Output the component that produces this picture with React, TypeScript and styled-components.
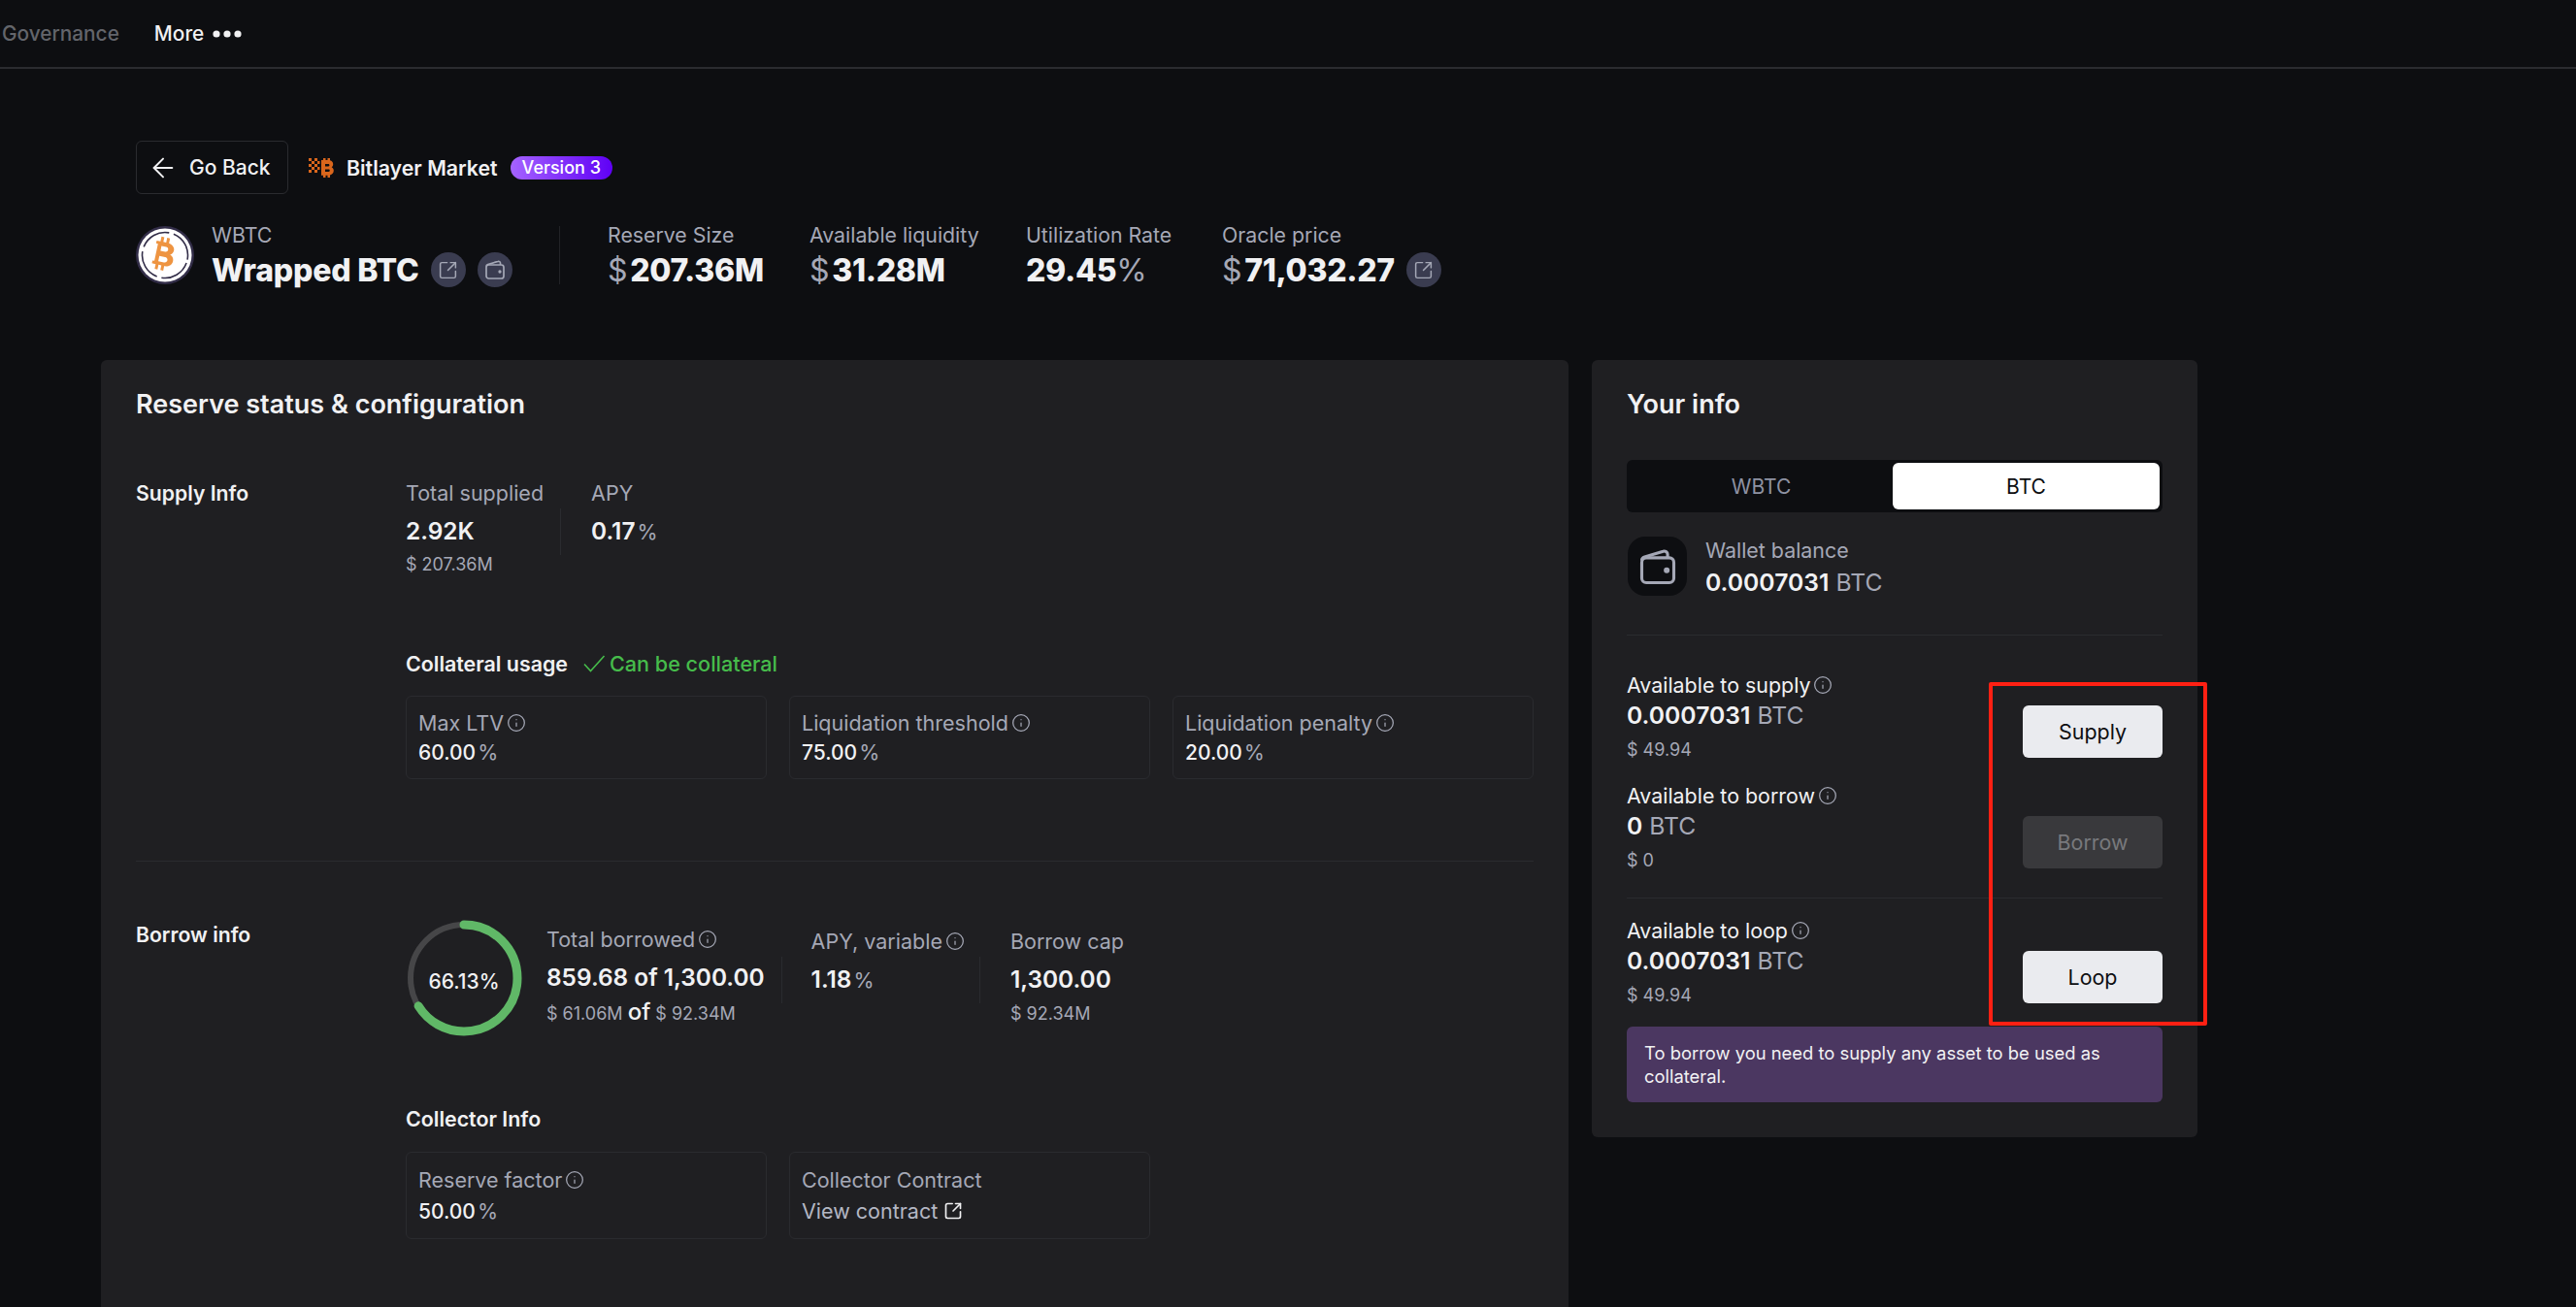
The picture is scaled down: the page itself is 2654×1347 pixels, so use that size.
import React from 'react';
import styled, { createGlobalStyle } from 'styled-components';
import { ArrowLeft, Info, SquareArrowOutUpRight } from 'lucide-react';

const GlobalStyle = createGlobalStyle`
  html, body {
    margin: 0;
    height: 100%;
    background: #0d0e11;
    overflow: hidden;
  }
  body {
    font-family: Inter, "Liberation Sans", sans-serif;
    color: #f1f1f3;
  }
  * { box-sizing: border-box; }
`;

const TopBar = styled.header`
  height: 71px;
  display: flex;
  align-items: center;
  gap: 36px;
  padding-left: 2px;
  border-bottom: 2px solid #2a2b2f;
`;

const NavItem = styled.span<{ $active?: boolean }>`
  display: flex;
  align-items: center;
  gap: 9px;
  font-size: 20.8px;
  font-weight: 500;
  color: ${(p) => (p.$active ? '#f1f1f3' : '#63656b')};
`;

const Hero = styled.section`
  padding: 74px 0 0 140px;
`;

const BackRow = styled.div`
  display: flex;
  align-items: center;
  height: 55px;
`;

const BackButton = styled.button`
  width: 157px;
  height: 55px;
  display: flex;
  align-items: center;
  gap: 11px;
  padding: 0 0 0 11px;
  margin-right: 21px;
  background: transparent;
  border: 1px solid #2a2b2f;
  border-radius: 6px;
  color: #f1f1f3;
  font: 500 21px Inter, sans-serif;
`;

const MarketName = styled.span`
  margin: 0 13px 0 13px;
  font-size: 21.3px;
  font-weight: 600;
  color: #f1f1f3;
`;

const VersionBadge = styled.span`
  height: 24px;
  padding: 0 12px;
  display: flex;
  align-items: center;
  border-radius: 12px;
  background: linear-gradient(90deg, #a563ff 0%, #5f00f5 100%);
  font-size: 18px;
  font-weight: 500;
  color: #fff;
`;

const AssetRow = styled.div`
  display: flex;
  align-items: flex-start;
  height: 60px;
  margin-top: 33px;
`;

const AssetName = styled.div`
  margin-left: 18px;
  width: 359px;
  border-right: 1px solid #222327;
  height: 60px;
`;

const HeroLabel = styled.div`
  font-size: 21.3px;
  line-height: 18px;
  color: #a5a8b6;
`;

const AssetTitle = styled.div`
  display: flex;
  align-items: center;
  height: 36px;
  margin-top: 9px;
  font-size: 32px;
  font-weight: 800;
  letter-spacing: -0.2px;
  color: #f1f1f3;
`;

const RoundIcon = styled.span`
  width: 36px;
  height: 36px;
  flex: none;
  margin-left: 12px;
  display: flex;
  align-items: center;
  justify-content: center;
  border-radius: 50%;
  background: #3a3c50;
  color: #a5a8b6;
`;

const HeroStats = styled.div`
  display: flex;
  padding-left: 49px;
`;

const HeroStat = styled.div<{ $width: number }>`
  width: ${(p) => p.$width}px;
`;

const HeroValue = styled.div`
  display: flex;
  align-items: center;
  height: 36px;
  margin-top: 9px;
  font-size: 32px;
  font-weight: 800;
  letter-spacing: -0.3px;
  color: #f1f1f3;
`;

const Unit = styled.span`
  color: #a5a8b6;
  font-weight: 400;
  margin: 0 3px;
  &:first-child { margin-left: 0; }
`;

const Panels = styled.main`
  display: flex;
  align-items: flex-start;
  gap: 24px;
  margin-top: 78px;
  padding-left: 104px;
`;

const LeftPanel = styled.section`
  width: 1512px;
  height: 1000px;
  padding: 31px 36px 0;
  border-radius: 6px;
  background: #1f1f22;
`;

const RightPanel = styled.aside`
  width: 624px;
  height: 801px;
  padding: 31px 36px 0;
  border-radius: 6px;
  background: #1f1f22;
`;

const PanelTitle = styled.h2`
  margin: 0;
  font-size: 27px;
  line-height: 30px;
  font-weight: 600;
  color: #f1f1f3;
`;

const InfoGrid = styled.div<{ $top: number }>`
  display: grid;
  grid-template-columns: 278px 1fr;
  margin-top: ${(p) => p.$top}px;
`;

const SectionLabel = styled.div`
  font-size: 21.2px;
  line-height: 30px;
  font-weight: 600;
  color: #f1f1f3;
`;

const StatRow = styled.div`
  display: flex;
  align-items: flex-start;
`;

const Stat = styled.div<{ $offset?: number; $pad?: number }>`
  margin-top: ${(p) => p.$offset ?? 0}px;
  padding-right: ${(p) => p.$pad ?? 0}px;
`;

const StatLabel = styled.div`
  display: flex;
  align-items: center;
  gap: 3px;
  font-size: 21.5px;
  line-height: 30px;
  color: #a5a8b6;
  white-space: nowrap;
`;

const StatValue = styled.div`
  margin-top: 9px;
  font-size: 24.4px;
  line-height: 30px;
  font-weight: 600;
  color: #f1f1f3;
  white-space: nowrap;
`;

const StatUnit = styled.span`
  margin-left: 2px;
  font-size: 21.5px;
  font-weight: 400;
  color: #a5a8b6;
`;

const OfWord = styled.span`
  font-size: 24px;
  font-weight: 500;
  color: #f1f1f3;
`;

const SubValue = styled.div<{ $gap?: number }>`
  margin-top: ${(p) => p.$gap ?? 8}px;
  font-size: 18px;
  line-height: 24px;
  color: #a5a8b6;
  white-space: nowrap;
`;

const VerticalRule = styled.div<{ $top: number; $right: number }>`
  width: 1px;
  height: 48px;
  flex: none;
  margin: ${(p) => p.$top}px ${(p) => p.$right}px 0 0;
  background: #2a2b2f;
`;

const SubHeading = styled.div<{ $top: number }>`
  display: flex;
  align-items: center;
  margin-top: ${(p) => p.$top}px;
  font-size: 21.4px;
  line-height: 30px;
  font-weight: 600;
  color: #f1f1f3;
`;

const GoodText = styled.span`
  display: flex;
  align-items: center;
  gap: 4px;
  margin-left: 16px;
  color: #46bc4b;
  font-size: 21.6px;
  font-weight: 500;
`;

const BoxRow = styled.div<{ $top: number }>`
  display: grid;
  grid-template-columns: repeat(3, 1fr);
  gap: 23px;
  margin-top: ${(p) => p.$top}px;
`;

const ParamBox = styled.div<{ $tall?: boolean }>`
  height: ${(p) => (p.$tall ? 90 : 86)}px;
  padding: ${(p) => (p.$tall ? 14 : 13)}px 12px 0;
  border: 1px solid #2a2b2f;
  border-radius: 6px;
`;

const ParamLabel = styled.div`
  display: flex;
  align-items: center;
  gap: 3px;
  font-size: 21.5px;
  line-height: 28px;
  color: #a5a8b6;
`;

const ParamValue = styled.div<{ $tall?: boolean }>`
  margin-top: ${(p) => (p.$tall ? 4 : 2)}px;
  font-size: 21px;
  line-height: 28px;
  font-weight: 500;
  color: #f1f1f3;
`;

const ContractLink = styled.div`
  display: flex;
  align-items: center;
  gap: 6px;
  margin-top: 4px;
  font-size: 21.5px;
  line-height: 28px;
  color: #b4b7c4;
`;

const Rule = styled.hr<{ $top: number }>`
  margin: ${(p) => p.$top}px 0 0;
  border: 0;
  height: 1px;
  background: #2a2b2f;
`;

const RingWrap = styled.div`
  position: relative;
  width: 120px;
  height: 120px;
  flex: none;
  margin-right: 25px;
`;

const RingText = styled.span`
  position: absolute;
  left: 0;
  right: 0;
  top: 52px;
  text-align: center;
  font-size: 21px;
  line-height: 24px;
  font-weight: 500;
  color: #f1f1f3;
`;

const ToggleTrack = styled.div`
  display: grid;
  grid-template-columns: 1fr 275px;
  height: 54px;
  margin-top: 42px;
  padding: 3px;
  border-radius: 6px;
  background: #0d0e11;
`;

const ToggleTab = styled.div<{ $active?: boolean }>`
  display: flex;
  align-items: center;
  justify-content: center;
  border-radius: 6px;
  background: ${(p) => (p.$active ? '#fff' : 'transparent')};
  color: ${(p) => (p.$active ? '#0d0e11' : '#8e92a3')};
  font-size: 21px;
  font-weight: 400;
`;

const WalletRow = styled.div`
  display: flex;
  margin-top: 25px;
  padding-left: 1px;
  height: 61px;
`;

const WalletBox = styled.div`
  width: 61px;
  height: 61px;
  flex: none;
  display: flex;
  align-items: center;
  justify-content: center;
  margin-right: 19px;
  border-radius: 18px;
  background: #0d0e11;
  color: #a5a8b6;
`;

const RowLabel = styled.div<{ $light?: boolean }>`
  display: flex;
  align-items: center;
  gap: 3px;
  font-size: 21.4px;
  line-height: 28px;
  color: ${(p) => (p.$light ? '#f1f1f3' : '#a5a8b6')};
`;

const RowValue = styled.div<{ $gap: number }>`
  margin-top: ${(p) => p.$gap}px;
  font-size: 24.7px;
  line-height: 30px;
  font-weight: 600;
  color: #f1f1f3;
`;

const TokenUnit = styled.span`
  margin-left: 7px;
  font-weight: 400;
  color: #a5a8b6;
`;

const ActionRow = styled.div<{ $top: number }>`
  display: flex;
  justify-content: space-between;
  align-items: flex-start;
  margin-top: ${(p) => p.$top}px;
`;

const ActionButton = styled.button<{ $disabled?: boolean }>`
  width: 144px;
  height: 54px;
  margin-top: 35px;
  border: 0;
  border-radius: 6px;
  background: ${(p) => (p.$disabled ? '#39393c' : '#eaebef')};
  color: ${(p) => (p.$disabled ? '#78797d' : '#0d0e11')};
  font: 400 21.4px Inter, sans-serif;
`;

const Notice = styled.div`
  height: 78px;
  margin-top: 20px;
  padding: 15px 18px 0;
  border-radius: 6px;
  background: #4b3761;
  font-size: 18.4px;
  line-height: 24px;
  color: #f1f1f3;
`;

const Annotation = styled.div`
  position: absolute;
  left: 2049px;
  top: 703px;
  width: 225px;
  height: 354px;
  border: 4px solid #ff2013;
  border-radius: 2px;
`;

const TokenMark = styled.svg`
  flex: none;
`;

const InfoIcon = () => <Info size={20} strokeWidth={1.5} color="#a5a8b6" />;

const LinkIcon = () => <SquareArrowOutUpRight size={21} strokeWidth={1.7} />;

const WalletIcon: React.FC<{ size: number }> = ({ size }) => (
  <svg width={size} height={size} viewBox="0 0 24 24" fill="none" stroke="currentColor" strokeWidth="1.7" strokeLinejoin="round">
    <path d="M3 8.5c0-1 .6-1.7 1.6-2L15 3.4c1.2-.4 2.5.4 2.5 1.7V7" />
    <rect x="3" y="7" width="18" height="14" rx="2.5" />
    <circle cx="17" cy="14" r="0.8" />
  </svg>
);

const TokenIcon = () => (
  <TokenMark width="60" height="60" viewBox="0 0 60 60" fill="none">
    <circle cx="30" cy="30" r="30" fill="#322d48" />
    <circle cx="30" cy="30" r="27.5" fill="#fff" />
    <circle cx="30" cy="30" r="23.5" stroke="#322d48" strokeWidth="1.6" strokeDasharray="32 5" transform="rotate(20 30 30)" />
    <path
      fill="#ee9441"
      fillRule="evenodd"
      transform="rotate(12 30 30) translate(-2.5 0)"
      d="M21 17h4v-5h3v5h3v-5h3v5.2c4 .8 6.5 3 6.5 6.3 0 2.3-1.2 4-3 5 2.800.9 4.3 3 4.3 5.8 0 4.2-3.3 6.7-7.8 7V46h-3v-5h-3v5h-3v-5h-4v-3h2V20h-2zM27 21.5v5h5c1.500 0 2.5-1 2.5-2.5s-1-2.5-2.5-2.5zM27 32v5.5h6c1.8 0 3-1 3-2.75S34.8 32 33 32z"
    />
  </TokenMark>
);

const BitlayerLogo = () => (
  <svg width="26" height="24" viewBox="0 0 26 24" fill="#d9661c">
    <rect x="0" y="2" width="3" height="3" />
    <rect x="6" y="2" width="3" height="3" />
    <rect x="3" y="5" width="3" height="3" />
    <rect x="9" y="5" width="2.5" height="3" />
    <rect x="0" y="8" width="3" height="3" />
    <rect x="6" y="8" width="3" height="3" />
    <rect x="3" y="11" width="3" height="3" />
    <rect x="9" y="11" width="2.5" height="3" />
    <rect x="0" y="14" width="3" height="3" />
    <rect x="6" y="14" width="3" height="3" />
    <path fillRule="evenodd" d="M13 4h2V2h2.5v2h2V2H22v2.3c2 .5 3.2 2 3.2 3.9 0 1.3-.6 2.4-1.500 3.1 1.3.7 2.1 2 2.1 3.5 0 2.5-1.6 4.2-3.8 4.7V22h-2.500v-2.3h-2V22H15v-2.3h-2zM17 8v2.500h3.3c.7 0 1.100-.5 1.100-1.200S21 8 20.3 8zM17 13.500v2.500h3.600c.8 0 1.200-.5 1.200-1.200s-.4-1.300-1.200-1.300z" />
  </svg>
);

const CheckMark = () => (
  <svg width="23" height="20" viewBox="0 0 23 20" fill="none" stroke="#46bc4b" strokeWidth="1.6">
    <path d="M1 10.5 7.5 17.5 21.5 2" />
  </svg>
);

const MoreDots = () => (
  <svg width="30" height="8" viewBox="0 0 30 8" fill="#f1f1f3">
    <circle cx="4" cy="4" r="3.6" />
    <circle cx="15" cy="4" r="3.6" />
    <circle cx="26" cy="4" r="3.6" />
  </svg>
);

const BorrowRing = () => (
  <RingWrap>
    <svg width="120" height="120" viewBox="0 0 120 120" fill="none">
      <circle cx="60" cy="60" r="55" stroke="#464648" strokeWidth="6" />
      <circle
        cx="60"
        cy="60"
        r="55"
        stroke="#60b867"
        strokeWidth="9"
        strokeLinecap="round"
        strokeDasharray={`${2 * Math.PI * 55 * 0.6613} ${2 * Math.PI * 55}`}
        transform="rotate(-90 60 60)"
      />
    </svg>
    <RingText>66.13%</RingText>
  </RingWrap>
);

const AvailableRow: React.FC<{
  label: string;
  amount: string;
  usd: string;
  action: string;
  top: number;
  disabled?: boolean;
}> = ({ label, amount, usd, action, top, disabled }) => (
  <ActionRow $top={top}>
    <div>
      <RowLabel $light>
        {label} <InfoIcon />
      </RowLabel>
      <RowValue $gap={2}>
        {amount}
        <TokenUnit>BTC</TokenUnit>
      </RowValue>
      <SubValue $gap={9}>{usd}</SubValue>
    </div>
    <ActionButton $disabled={disabled}>{action}</ActionButton>
  </ActionRow>
);

const App: React.FC = () => (
  <>
    <GlobalStyle />
    <TopBar>
      <NavItem>Governance</NavItem>
      <NavItem $active>
        More <MoreDots />
      </NavItem>
    </TopBar>

    <Hero>
      <BackRow>
        <BackButton>
          <ArrowLeft size={32} strokeWidth={1.5} />
          Go Back
        </BackButton>
        <BitlayerLogo />
        <MarketName>Bitlayer Market</MarketName>
        <VersionBadge>Version 3</VersionBadge>
      </BackRow>

      <AssetRow>
        <TokenIcon />
        <AssetName>
          <HeroLabel>WBTC</HeroLabel>
          <AssetTitle>
            Wrapped BTC
            <RoundIcon>
              <LinkIcon />
            </RoundIcon>
            <RoundIcon>
              <WalletIcon size={24} />
            </RoundIcon>
          </AssetTitle>
        </AssetName>
        <HeroStats>
          <HeroStat $width={208}>
            <HeroLabel>Reserve Size</HeroLabel>
            <HeroValue>
              <Unit>$</Unit>207.36M
            </HeroValue>
          </HeroStat>
          <HeroStat $width={223}>
            <HeroLabel>Available liquidity</HeroLabel>
            <HeroValue>
              <Unit>$</Unit>31.28M
            </HeroValue>
          </HeroStat>
          <HeroStat $width={202}>
            <HeroLabel>Utilization Rate</HeroLabel>
            <HeroValue>
              29.45<Unit>%</Unit>
            </HeroValue>
          </HeroStat>
          <HeroStat $width={240}>
            <HeroLabel>Oracle price</HeroLabel>
            <HeroValue>
              <Unit>$</Unit>71,032.27
              <RoundIcon>
                <LinkIcon />
              </RoundIcon>
            </HeroValue>
          </HeroStat>
        </HeroStats>
      </AssetRow>
    </Hero>

    <Panels>
      <LeftPanel>
        <PanelTitle>Reserve status &amp; configuration</PanelTitle>

        <InfoGrid $top={61}>
          <SectionLabel>Supply Info</SectionLabel>
          <div>
            <StatRow>
              <Stat $pad={17}>
                <StatLabel>Total supplied</StatLabel>
                <StatValue>2.92K</StatValue>
                <SubValue>$ 207.36M</SubValue>
              </Stat>
              <VerticalRule $top={31} $right={31} />
              <Stat>
                <StatLabel>APY</StatLabel>
                <StatValue>
                  0.17<StatUnit>%</StatUnit>
                </StatValue>
              </Stat>
            </StatRow>

            <SubHeading $top={75}>
              Collateral usage
              <GoodText>
                <CheckMark />
                Can be collateral
              </GoodText>
            </SubHeading>
            <BoxRow $top={18}>
              <ParamBox>
                <ParamLabel>
                  Max LTV <InfoIcon />
                </ParamLabel>
                <ParamValue>
                  60.00<StatUnit>%</StatUnit>
                </ParamValue>
              </ParamBox>
              <ParamBox>
                <ParamLabel>
                  Liquidation threshold <InfoIcon />
                </ParamLabel>
                <ParamValue>
                  75.00<StatUnit>%</StatUnit>
                </ParamValue>
              </ParamBox>
              <ParamBox>
                <ParamLabel>
                  Liquidation penalty <InfoIcon />
                </ParamLabel>
                <ParamValue>
                  20.00<StatUnit>%</StatUnit>
                </ParamValue>
              </ParamBox>
            </BoxRow>
          </div>
        </InfoGrid>

        <Rule $top={84} />

        <InfoGrid $top={60}>
          <SectionLabel>Borrow info</SectionLabel>
          <div>
            <StatRow>
              <BorrowRing />
              <Stat $offset={5} $pad={17}>
                <StatLabel>
                  Total borrowed <InfoIcon />
                </StatLabel>
                <StatValue>859.68 of 1,300.00</StatValue>
                <SubValue $gap={9}>
                  $ 61.06M <OfWord>of</OfWord> $ 92.34M
                </SubValue>
              </Stat>
              <VerticalRule $top={38} $right={30} />
              <Stat $offset={7} $pad={15}>
                <StatLabel>
                  APY, variable <InfoIcon />
                </StatLabel>
                <StatValue>
                  1.18<StatUnit>%</StatUnit>
                </StatValue>
              </Stat>
              <VerticalRule $top={38} $right={31} />
              <Stat $offset={7}>
                <StatLabel>Borrow cap</StatLabel>
                <StatValue>1,300.00</StatValue>
                <SubValue $gap={9}>$ 92.34M</SubValue>
              </Stat>
            </StatRow>

            <SubHeading $top={70}>Collector Info</SubHeading>
            <BoxRow $top={19}>
              <ParamBox $tall>
                <ParamLabel>
                  Reserve factor <InfoIcon />
                </ParamLabel>
                <ParamValue $tall>
                  50.00<StatUnit>%</StatUnit>
                </ParamValue>
              </ParamBox>
              <ParamBox $tall>
                <ParamLabel>Collector Contract</ParamLabel>
                <ContractLink>
                  View contract
                  <SquareArrowOutUpRight size={20} strokeWidth={2} color="#f1f1f3" />
                </ContractLink>
              </ParamBox>
            </BoxRow>
          </div>
        </InfoGrid>
      </LeftPanel>

      <RightPanel>
        <PanelTitle>Your info</PanelTitle>
        <ToggleTrack>
          <ToggleTab>WBTC</ToggleTab>
          <ToggleTab $active>BTC</ToggleTab>
        </ToggleTrack>

        <WalletRow>
          <WalletBox>
            <WalletIcon size={44} />
          </WalletBox>
          <div>
            <RowLabel>Wallet balance</RowLabel>
            <RowValue $gap={4}>
              0.0007031<TokenUnit>BTC</TokenUnit>
            </RowValue>
          </div>
        </WalletRow>

        <Rule $top={40} />

        <AvailableRow top={37} label="Available to supply" amount="0.0007031" usd="$ 49.94" action="Supply" />
        <AvailableRow top={21} label="Available to borrow" amount="0" usd="$ 0" action="Borrow" disabled />
        <Rule $top={26} />
        <AvailableRow top={19} label="Available to loop" amount="0.0007031" usd="$ 49.94" action="Loop" />

        <Notice>To borrow you need to supply any asset to be used as collateral.</Notice>
      </RightPanel>
    </Panels>

    <Annotation />
  </>
);

export default App;
